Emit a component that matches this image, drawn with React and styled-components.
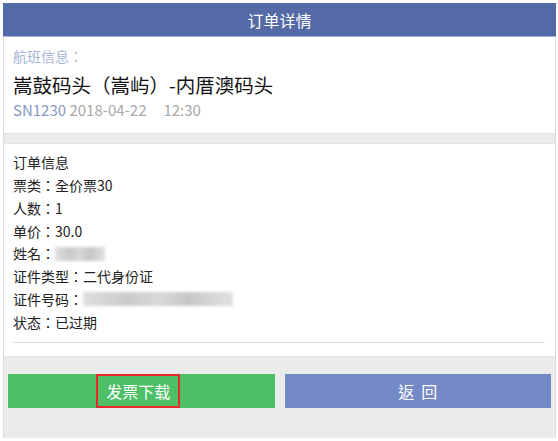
import React from "react";
import styled, { createGlobalStyle } from "styled-components";

const Global = createGlobalStyle`
  html, body { margin: 0; padding: 0; background: #fff; }
  body {
    padding: 3px 2px 3px 3px;
    font-family: "Noto Sans CJK TC", "Noto Sans", sans-serif;
  }
`;

const Page = styled.div`
  width: 553px;
  height: 435px;
  box-sizing: border-box;
  background: #ebebeb;
  border-left: 1px solid #dcdcdc;
  border-right: 1px solid #dcdcdc;
  display: flex;
  flex-direction: column;
`;

const Header = styled.div`
  height: 33px;
  background: #546aa6;
  border-bottom: 1px solid #a9b5d6;
  color: #fff;
  font-size: 16px;
  display: flex;
  align-items: center;
  justify-content: center;
  margin: 0 -1px;
`;

const Card = styled.div`
  background: #fff;
  border-bottom: 1px solid #e2e2e2;
  border-top: ${(p) => (p.$top ? "1px solid #e2e2e2" : "none")};
  padding: ${(p) => p.$pad};
`;

const Label = styled.div`
  font-size: 14px;
  line-height: 20px;
  color: #a6b6d8;
`;

const Route = styled.div`
  margin-top: 4px;
  font-size: 19.5px;
  line-height: 30px;
  color: #111;
`;

const Meta = styled.div`
  font-size: 15px;
  line-height: 20px;
  color: #a8a8a8;
`;

const Flight = styled.span`
  color: #8798c6;
`;

const Spacer = styled.span`
  display: inline-block;
  width: ${(p) => p.$w}px;
`;

const Gap = styled.div`
  height: 9px;
`;

const Lines = styled.div`
  padding-left: 9px;
`;

const Line = styled.div`
  font-size: 14px;
  line-height: 22.85px;
  color: #222;
  display: flex;
  align-items: center;
`;

const Blur = styled.span`
  display: inline-block;
  width: ${(p) => p.$w}px;
  height: 14px;
  background: linear-gradient(90deg, #d8d8d8, #bdbdbd 30%, #cfcfcf 50%, #b8b8b8 70%, #dadada);
  filter: blur(1.5px);
  opacity: 0.8;
`;

const Divider = styled.div`
  height: 1px;
  background: #dedede;
  margin: 8px 10px 0 8px;
`;

const Actions = styled.div`
  display: flex;
  gap: 10px;
  padding: 17px 4px 0 4px;
`;

const Button = styled.div`
  flex: 1;
  height: 34px;
  background: ${(p) => p.$bg};
  color: #fff;
  font-size: 16px;
  display: flex;
  align-items: center;
  justify-content: center;
`;

const Marked = styled.span`
  height: 34px;
  box-sizing: border-box;
  border: 2px solid #e8282c;
  padding: 0 8px;
  display: flex;
  align-items: center;
  margin-left: -6px;
`;

export default function App() {
  return (
    <>
      <Global />
      <Page>
        <Header>订单详情</Header>
        <Card $pad="9px 9px 13px">
          <Label>航班信息：</Label>
          <Route>嵩鼓码头（嵩屿）-内厝澳码头</Route>
          <Meta>
            <Flight>SN1230</Flight> 2018-04-22<Spacer $w={17} />12:30
          </Meta>
        </Card>
        <Gap />
        <Card $top $pad="7px 0 13px">
          <Lines>
            <Line>订单信息</Line>
            <Line>票类：全价票30</Line>
            <Line>人数：1</Line>
            <Line>单价：30.0</Line>
            <Line>
              姓名：<Blur $w={50} />
            </Line>
            <Line>证件类型：二代身份证</Line>
            <Line>
              证件号码：<Blur $w={150} />
            </Line>
            <Line>状态：已过期</Line>
          </Lines>
          <Divider />
        </Card>
        <Actions>
          <Button $bg="#4dbf66">
            <Marked>发票下载</Marked>
          </Button>
          <Button $bg="#738ac7">返&nbsp;&nbsp;回</Button>
        </Actions>
      </Page>
    </>
  );
}
